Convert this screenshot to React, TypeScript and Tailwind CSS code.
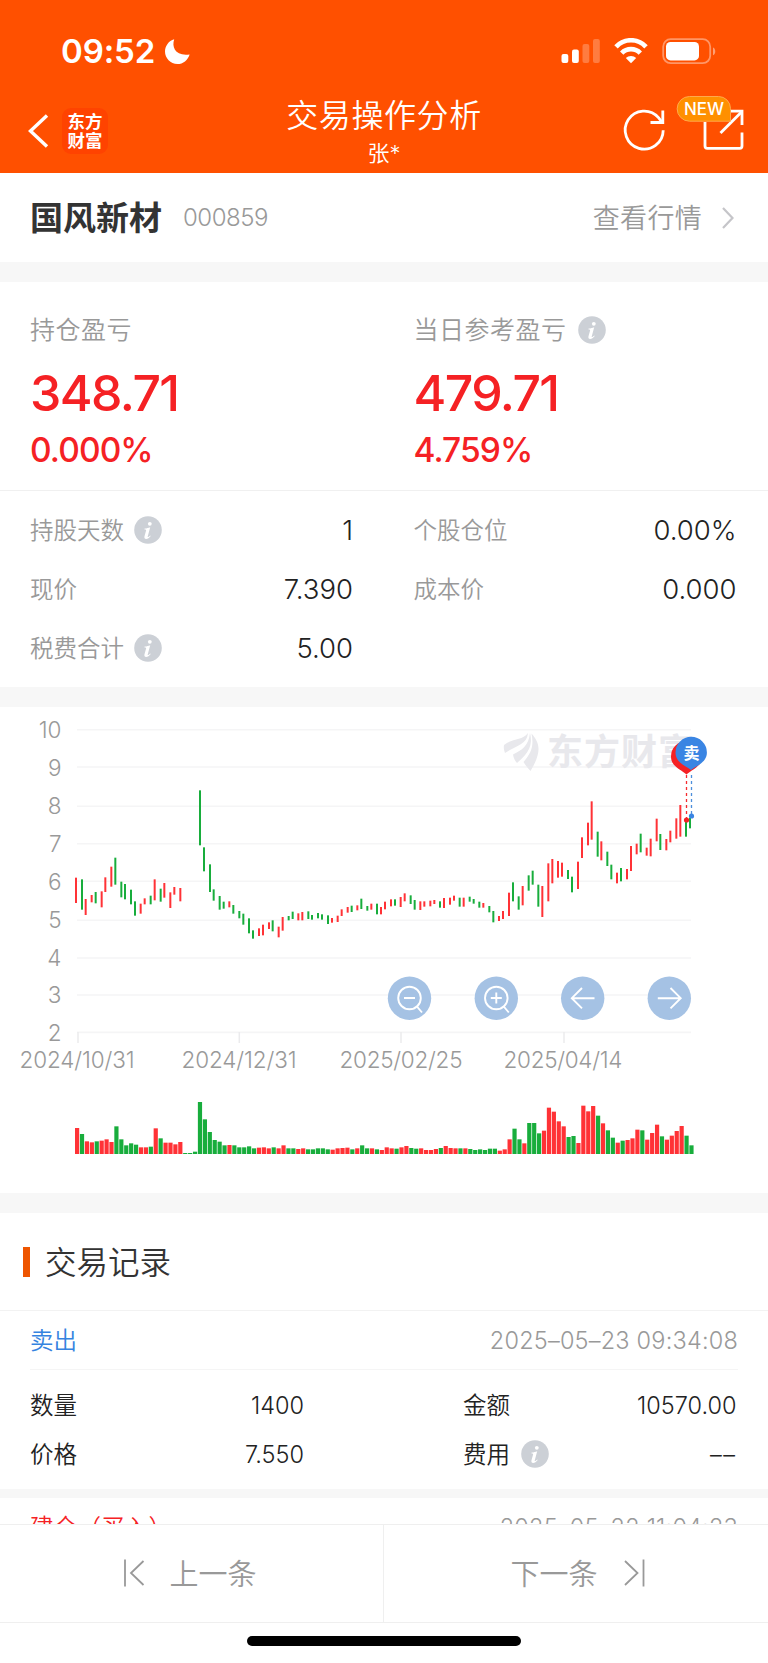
import React from "react";

type Bar = [x: number, top: number, bottom: number, up: 0 | 1];

// Daily price ranges: x, high y, low y in thirds of a pixel, and whether the day closed up.
const ranges: Bar[] = [
  [228,533,609,1],[246,538,629,0],[257,597,645,1],[275,585,607,1],[287,576,610,0],[305,574,622,1],[316,532,576,1],[334,500,560,1],
  [346,473,554,0],[364,545,592,0],[375,552,598,0],[393,569,613,0],[405,604,647,0],[422,611,641,1],[434,595,613,1],[452,587,613,0],
  [464,538,601,1],[482,566,605,0],[493,549,593,1],[511,577,624,1],[523,561,584,1],[541,564,604,1],[600,271,436,0],[612,442,514,0],
  [630,493,576,0],[641,568,602,0],[659,588,629,0],[671,605,626,0],[688,604,622,1],[700,615,641,0],[718,633,655,0],[730,641,674,0],
  [747,655,700,0],[759,691,716,0],[777,685,708,1],[789,674,706,1],[807,667,687,1],[818,661,694,0],[836,680,712,1],[848,651,692,1],
  [866,648,661,0],[878,635,657,0],[895,640,661,1],[907,636,661,1],[925,634,657,0],[936,645,659,0],[954,639,655,0],[966,643,659,0],
  [984,646,672,0],[996,654,668,1],[1013,647,666,1],[1025,628,648,1],[1043,621,638,1],[1055,617,636,0],[1072,616,631,1],[1084,596,627,0],
  [1102,618,632,0],[1114,611,629,1],[1131,611,643,0],[1143,621,643,1],[1155,605,628,1],[1173,598,619,1],[1185,598,617,0],[1202,591,621,1],
  [1214,580,604,1],[1232,586,612,0],[1244,600,629,0],[1261,604,630,1],[1273,604,620,1],[1291,602,619,1],[1303,600,612,1],[1320,604,623,0],
  [1332,594,624,1],[1350,593,614,1],[1362,587,602,1],[1379,593,620,0],[1391,593,620,1],[1409,590,605,0],[1421,597,611,0],[1438,605,623,0],
  [1450,609,623,1],[1468,618,637,0],[1480,633,667,0],[1497,648,663,1],[1509,633,657,1],[1527,578,648,1],[1539,547,604,0],[1556,589,629,0],
  [1568,558,616,1],[1586,526,572,0],[1598,512,554,0],[1615,554,620,0],[1627,558,651,1],[1645,490,604,1],[1657,477,550,1],[1674,483,533,1],
  [1686,488,530,1],[1704,510,537,0],[1716,530,577,0],[1734,485,567,1],[1746,412,474,1],[1764,368,436,1],[1775,304,419,1],[1793,395,470,0],
  [1804,424,481,1],[1822,455,498,0],[1834,494,538,0],[1851,518,550,1],[1863,504,544,0],[1881,507,538,1],[1893,438,513,1],[1910,431,463,1],
  [1922,401,457,0],[1940,443,467,1],[1952,416,469,1],[1970,356,424,1],[1981,402,450,0],[1999,417,451,1],[2011,392,427,1],[2029,355,416,1],
  [2041,315,410,1],[2058,365,410,0],[2070,353,385,0],
];

// Daily volume in thirds of a pixel; negative values are down days.
const volumes = [
  78,-60,38,35,-38,40,44,36,-83,-44,-26,-32,-28,20,20,-22,77,-47,34,34,29,36,-3,-3,-7,-156,-104,-66,-42,-37,-26,27,-26,-20,-20,-23,-17,
  19,20,17,-20,17,26,-17,-17,15,17,-14,-14,-17,-17,-14,13,17,18,19,-14,17,-26,-17,17,-14,12,20,17,-16,20,24,-18,-16,17,12,12,15,-18,24,
  18,17,-17,17,-15,-12,-14,-12,-16,-16,10,14,44,-76,-44,32,-93,-93,-62,70,139,127,98,83,-51,-54,33,145,128,144,-115,92,-71,-49,34,-40,42,
  47,73,-71,43,63,88,-53,43,55,69,84,-55,-26,
];

const gridLines = [729.7, 767, 806.2, 843.7, 881.2, 920.2, 958, 995, 1032.4];
const axisLabels = [10, 9, 8, 7, 6, 5, 4, 3, 2];
const dates = [
  { x: 20, w: 114, tick: 78, label: "2024/10/31" },
  { x: 182, w: 114, tick: 239.3, label: "2024/12/31" },
  { x: 340, w: 122, tick: 401, label: "2025/02/25" },
  { x: 504, w: 118, tick: 564, label: "2025/04/14" },
];

const color = (up: boolean) => (up ? "#ff3236" : "#18ad3c");

function InfoIcon() {
  return (
    <svg className="mb-[2px] h-7 w-7 shrink-0" viewBox="0 0 28 28">
      <circle cx="14" cy="14" r="13.8" fill="#ccd0d6" />
      <circle cx="15.8" cy="7.8" r="1.9" fill="#fff" />
      <path d="M10.600 12.600c2.200-.3 3.800-.8 5.600-1.400l-2.500 9.200c-.2.900.6.900 2.500-.900l.5.600c-1.500 1.900-3 2.900-4.500 2.900-1.600 0-2.100-1.100-1.700-2.700l1.600-5.700c.2-.900-.2-1.200-1.600-1.200z" fill="#fff" />
    </svg>
  );
}

function StatusBar() {
  return (
    <div className="flex h-[90px] items-center justify-between pt-[13px] pr-[52px] pl-[61px]">
      <div className="flex items-center gap-[9px]">
        <span className="text-[33px] leading-none font-semibold tracking-[-0.100px]">09:52</span>
        <svg className="h-[27px] w-[27px]" viewBox="0 0 27 27" fill="#fff">
          <path d="M10.200 1.200C7.500 9 11.500 18.500 25.600 16.400 24 22 19 26 13.500 26 6.400 26 1 20.300 1 13.600 1 8 4.700 2.700 10.200 1.200z" />
        </svg>
      </div>
      <svg className="h-7 w-[155px]" viewBox="0 0 155 28">
        <g fill="#fff">
          <rect x="0.500" y="16" width="6.800" height="9" rx="2" />
          <rect x="11" y="11.500" width="6.800" height="13.500" rx="2" />
          <rect x="21.500" y="6" width="6.800" height="19" rx="2" opacity=".25" />
          <rect x="32" y="1" width="6.800" height="24" rx="2" opacity=".25" />
        </g>
        <g fill="none" stroke="#fff" strokeWidth="4.700">
          <path d="M55 8.800a20.500 20.500 0 0 1 30 0" />
          <path d="M60.700 15.100a13 13 0 0 1 18.600 0" />
        </g>
        <path d="M64.800 20.100a7.500 7.500 0 0 1 10.400 0L70 25.200z" fill="#fff" />
        <rect x="102.200" y="1.200" width="47" height="24" rx="7.500" fill="none" stroke="#fff" strokeOpacity=".4" strokeWidth="1.800" />
        <rect x="105" y="4" width="33" height="18.400" rx="4.500" fill="#fff" />
        <path d="M152 9.500c3 1 3 6.800 0 7.800z" fill="#fff" opacity=".45" />
      </svg>
    </div>
  );
}

function NavBar() {
  return (
    <div className="grid h-[83px] grid-cols-[1fr_auto_1fr] items-center px-[20px]">
      <div className="mb-[2px] ml-[7px] flex items-center">
        <svg className="h-9 w-[22px]" viewBox="0 0 22 36" fill="none" stroke="#fff" strokeWidth="3.400">
          <path d="M20 2.500 3.500 18 20 33.500" />
        </svg>
        <div className="ml-[13px] flex h-[46px] w-[46px] flex-col items-center justify-center rounded-[9px] bg-[#ff4300] text-[17.500px] leading-[19px] font-bold">
          <span>东方</span>
          <span>财富</span>
        </div>
      </div>
      <div className="flex flex-col items-center font-[350]">
        <span className="mt-[3px] text-[32px] leading-[40px] tracking-[0.600px]">交易操作分析</span>
        <span className="text-[22px] leading-[34px]">张*</span>
      </div>
      <div className="flex justify-end pb-[3px]">
        <svg className="h-[62px] w-[125px] overflow-visible" viewBox="0 0 125 62" fill="none" stroke="#fff" strokeWidth="2.800">
          <path d="M40.200 31.200A19 19 0 1 1 35.500 18.600L38.500 22.500" />
          <path d="M39.800 11.500V23.500H27.500" />
          <path d="M82 23v24q0 2.300 2.300 2.300h32.400q2.300 0 2.300-2.300V33.500" />
          <path d="M106.500 12.200H119V26" />
          <path d="M118.500 13 97.500 34" />
          <path d="M66.500-2.500H95.500A12 12 0 0 1 107.500 9.500V22.200H66.500A12.300 12.300 0 0 1 66.500-2.500z" fill="#ff9000" stroke="#ffa94c" strokeWidth="1" />
          <text x="61" y="16" fill="#fff" stroke="none" fontSize="17" fontWeight="500" textLength="40">NEW</text>
        </svg>
      </div>
    </div>
  );
}

function Profit({ label, info, amount, percent }: { label: string; info?: boolean; amount: string; percent: string }) {
  return (
    <div className="w-[383.500px] shrink-0 pt-[32px] text-[#f52124]">
      <div className="flex h-[34px] items-center gap-[11px] text-[25px] font-[350] tracking-[0.500px] text-[#999]">
        <span>{label}</span>
        {info && <InfoIcon />}
      </div>
      <div className="mt-[15px] text-[50px] leading-[60px] font-medium tracking-[-1.600px]">{amount}</div>
      <div className="mt-[7px] text-[33.500px] leading-[40px] font-medium tracking-[-0.900px]">{percent}</div>
    </div>
  );
}

function Fact({ label, value, info }: { label: string; value: string; info?: boolean }) {
  return (
    <div className="flex h-[59px] items-center justify-between">
      <span className="flex items-center gap-[10px] text-[23.500px] font-[350] text-[#999]">
        {label}
        {info && <InfoIcon />}
      </span>
      <span className="text-[27.500px] font-[350] text-[#222]">{value}</span>
    </div>
  );
}

function PriceChart() {
  return (
    <svg className="block h-[486px] w-[768px]" viewBox="0 707 768 486">
      <g stroke="#f5f5f6" strokeWidth="1.600">
        {gridLines.map((y) => (
          <line key={y} x1="77" x2="691" y1={y} y2={y} />
        ))}
      </g>
      <g fill="#e8e8ec">
        <path d="M504 745C512 738 522 741 528 733 527 745 515 746 505 753 504 750 503.500 748 504 745z" />
        <path d="M513 754.500C522 750 528.500 746 530 733 533 745 529 753 517 763 515 761 513.500 758 513 754.500z" />
        <path d="M523.500 762C531.500 753 534 746 531.500 733.500 540 743 542 752 530.500 771 528 768 526 766 523.500 762z" />
        <text x="547" y="765" fontSize="36" fontWeight="700" textLength="147">东方财富</text>
      </g>
      <g fill="#999" fontSize="22.500" fontWeight="300">
        {axisLabels.map((n, i) => (
          <text key={n} x="61.500" y={738 + i * 37.920} textAnchor="end">{n}</text>
        ))}
        {dates.map((d) => (
          <text key={d.label} x={d.x - 0.500} y="1068" textLength={d.w + 1}>{d.label}</text>
        ))}
      </g>
      <g stroke="#ebebed" strokeWidth="1.500">
        {dates.map((d) => (
          <line key={d.label} x1={d.tick} x2={d.tick} y1="1032" y2="1043" />
        ))}
      </g>
      {ranges.map(([x, top, bottom, up]) => (
        <rect key={x} x={x / 3 - 1} y={700 + top / 3} width="2" height={(bottom - top) / 3} fill={color(up === 1)} />
      ))}
      {volumes.map((v, i) => (
        <rect key={i} x={75 + i * 4.915} y={1154 - Math.abs(v) / 3} width="4.200" height={Math.abs(v) / 3} fill={color(v > 0)} />
      ))}
      <line x1="686.500" x2="686.500" y1="775" y2="819" stroke="#f52b2e" strokeWidth="1.300" strokeDasharray="3 3" />
      <line x1="691.500" x2="691.500" y1="775" y2="815" stroke="#4d8fdc" strokeWidth="1.300" strokeDasharray="3 3" />
      <circle cx="686.500" cy="820" r="2.600" fill="#f52124" />
      <circle cx="691.500" cy="816" r="2.600" fill="#3a85e3" />
      <path d="M686.500 774.500C682 770 671 767 671 756.500a15.500 15.500 0 0 1 31 0c0 10.500-11 13.500-15.500 18z" fill="#f52124" />
      <path d="M691 770C686.500 766 675.500 763 675.500 752.500a15.700 15.700 0 0 1 31.400 0c0 10.500-11.400 13.500-15.900 17.500z" fill="#3a85e3" />
      <text x="691.400" y="758.600" fill="#fff" fontSize="16" fontWeight="700" textAnchor="middle">卖</text>
      {[409.500, 496.300, 582.700, 669.300].map((x) => (
        <circle key={x} cx={x} cy="998.200" r="21.700" fill="#a5c2e4" />
      ))}
      <g fill="none" stroke="#fff" strokeWidth="1.900">
        <circle cx="409.500" cy="998" r="11.300" />
        <path d="M404 998h11M416.500 1006l5.500 6.500" />
        <circle cx="496.300" cy="998" r="11.300" />
        <path d="M490.800 998h11M496.300 992.500v11M503.300 1006l5.500 6.500" />
        <path d="M594.500 998.200H572M582 988l-10.200 10.200L582 1008.400" />
        <path d="M657.800 998.200h22.500M670.500 988l10.200 10.200-10.200 10.200" />
      </g>
    </svg>
  );
}

function Cell({ label, value, info }: { label: string; value: React.ReactNode; info?: boolean }) {
  return (
    <div className="flex h-[49.300px] items-center justify-between text-[23.500px] font-[350] text-[#222]">
      <span className="flex items-center gap-[11px]">
        {label}
        {info && <InfoIcon />}
      </span>
      <span>{value}</span>
    </div>
  );
}

export default function App() {
  return (
    <div className="flex h-[1663px] w-[768px] flex-col overflow-hidden bg-white font-['Inter','Noto_Sans_CJK_SC',sans-serif]">
      <header className="h-[173px] shrink-0 bg-[#ff5000] text-white">
        <StatusBar />
        <NavBar />
      </header>

      <main className="h-[1351px] shrink-0 overflow-hidden">
        <section className="flex h-[89px] items-center justify-between pr-[34px] pl-[30px]">
          <div className="flex items-center gap-[21px]">
            <h1 className="pt-[3px] text-[33px] font-bold text-[#333]">国风新材</h1>
            <span className="text-[24px] font-light tracking-[-0.500px] text-[#999]">000859</span>
          </div>
          <div className="flex items-center gap-[20px] text-[27px] font-[350] text-[#999]">
            <span className="pt-[3px] tracking-[0.300px]">查看行情</span>
            <svg className="h-6 w-3" viewBox="0 0 12 24" fill="none" stroke="#c5c5c9" strokeWidth="2.200">
              <path d="M1 2l9.500 10L1 22" />
            </svg>
          </div>
        </section>
        <div className="h-5 bg-[#f7f7f7]" />

        <section className="flex h-[209px] border-b border-[#f0f0f0] pl-[30px]">
          <Profit label="持仓盈亏" amount="348.71" percent="0.000%" />
          <Profit label="当日参考盈亏" info amount="479.71" percent="4.759%" />
        </section>

        <section className="grid h-[196px] grid-cols-[323px_323px] content-start gap-x-[60.500px] pt-[10px] pl-[30px]">
          <Fact label="持股天数" info value="1" />
          <Fact label="个股仓位" value="0.00%" />
          <Fact label="现价" value="7.390" />
          <Fact label="成本价" value="0.000" />
          <Fact label="税费合计" info value="5.00" />
        </section>
        <div className="h-5 bg-[#f7f7f7]" />

        <PriceChart />
        <div className="h-5 bg-[#f7f7f7]" />

        <section>
          <div className="flex h-[98px] items-center border-b border-[#f2f2f2] pl-[23px]">
            <span className="h-[30px] w-[7px] bg-[#ee5500]" />
            <h2 className="ml-[15px] pt-[2px] text-[31.500px] font-[350] text-[#333]">交易记录</h2>
          </div>
          <div className="mx-[30px] flex h-[59px] items-center justify-between border-b border-[#f5f5f5] pt-[2px] text-[23.500px] font-[350]">
            <span className="text-[#3583e0]">卖出</span>
            <span className="font-light tracking-[0.200px] text-[#999]">2025–05–23 09:34:08</span>
          </div>
          <div className="grid h-[118.500px] grid-cols-[274px_273.500px] content-start gap-x-[159px] pt-[11px] pl-[30px]">
            <Cell label="数量" value="1400" />
            <Cell label="金额" value="10570.00" />
            <Cell label="价格" value="7.550" />
            <Cell label="费用" info value={<span className="tracking-[1.500px]">––</span>} />
          </div>
          <div className="h-[9.500px] bg-[#f7f7f7]" />
          <div className="mx-[30px] flex h-[59px] items-center justify-between text-[23.500px] font-[350]">
            <span className="tracking-[0.200px] text-[#f52124]">建仓（买入）</span>
            <span className="font-light tracking-[0.200px] text-[#999]">2025–05–22 11:04:23</span>
          </div>
        </section>
      </main>

      <nav className="grid h-[98.500px] shrink-0 grid-cols-2 border-y border-[#efefef] text-[29px] font-[350] text-[#999]">
        <div className="flex items-center justify-center gap-[24px] border-r border-[#efefef] pr-[3px]">
          <svg className="h-7 w-[22px]" viewBox="0 0 22 28" fill="none" stroke="#999" strokeWidth="1.800">
            <path d="M2 .5v27M20.500 2 8 14l12.500 12" />
          </svg>
          <span className="pt-[2px]">上一条</span>
        </div>
        <div className="flex items-center justify-center gap-[25px] pl-[3px]">
          <span className="pt-[2px]">下一条</span>
          <svg className="h-7 w-[22px]" viewBox="0 0 22 28" fill="none" stroke="#999" strokeWidth="1.800">
            <path d="M20.500 .5v27M2 2l12.500 12L2 26" />
          </svg>
        </div>
      </nav>
      <div className="flex flex-1 justify-center pt-[13.500px]">
        <div className="h-[10px] w-[274px] rounded-full bg-black" />
      </div>
    </div>
  );
}
